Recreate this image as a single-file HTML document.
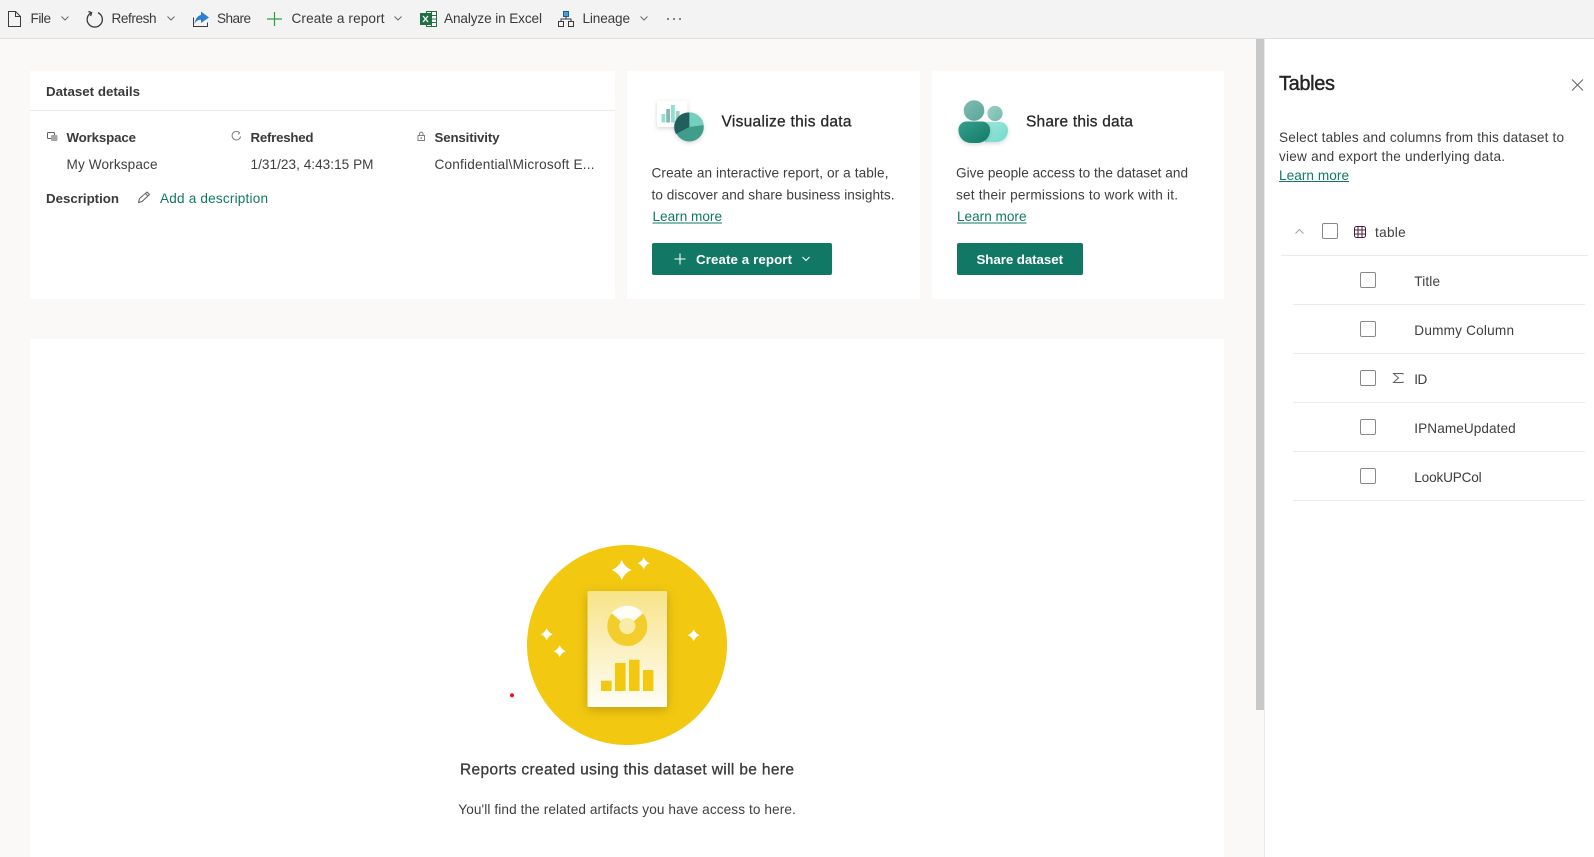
<!DOCTYPE html>
<html lang="en">
<head>
<meta charset="utf-8">
<title>Dataset details</title>
<style>
html,body{margin:0;padding:0;background:#faf9f8;width:1594px;height:857px;overflow:hidden}
svg{display:block;position:absolute;left:0;top:0;font-size:13.6px;font-family:"Liberation Sans",Arial,sans-serif}
text{fill:#323130;white-space:pre}
.tb{fill:#3b3a39}
.b{font-weight:bold;fill:#3b3a39}
.l{fill:#117865}
.v{fill:#3f3e3c}
.ic{fill:none;stroke:#3b3a39}
.ch{fill:none;stroke:#6b6a69}
.cb{fill:#fff;stroke:#8a8886}
.dv{stroke:#edebe9}
</style>
</head>
<body>
<svg width="1594" height="857" viewBox="0 0 1594 857" xmlns="http://www.w3.org/2000/svg">
<defs>
<filter id="s1" x="-30%" y="-30%" width="160%" height="160%"><feDropShadow dx="0" dy="1.5" stdDeviation="2" flood-color="#000" flood-opacity=".16"/></filter>
<filter id="s2" x="-30%" y="-30%" width="160%" height="160%"><feDropShadow dx="0" dy="3" stdDeviation="5" flood-color="#7a6000" flood-opacity=".4"/></filter>
<linearGradient id="pg" x1="0" y1="0" x2="0" y2="1"><stop offset="0" stop-color="#f8e388"/><stop offset="1" stop-color="#fefdf8"/></linearGradient>
<linearGradient id="h1" x1="0" y1="0" x2="1" y2="1"><stop offset="0" stop-color="#80bdb2"/><stop offset="1" stop-color="#58a598"/></linearGradient>
<linearGradient id="h2" x1="0" y1="0" x2="1" y2="1"><stop offset="0" stop-color="#98cfc5"/><stop offset="1" stop-color="#74baae"/></linearGradient>
<linearGradient id="b1" x1="0" y1="0" x2="1" y2="1"><stop offset="0" stop-color="#37a08c"/><stop offset="1" stop-color="#0f7a67"/></linearGradient>
<linearGradient id="b2" x1="0" y1="0" x2="1" y2="1"><stop offset="0" stop-color="#a0e4da"/><stop offset="1" stop-color="#6fdccb"/></linearGradient>
</defs>

<!-- page -->
<rect width="1594" height="857" fill="#faf9f8"/>

<!-- toolbar -->
<rect width="1594" height="38.5" fill="#f3f3f3"/>
<rect y="38" width="1594" height="1" fill="#e1dfdd"/>

<path class="ic" d="M8.5 11.5H15.5L20.5 16.5V26.5H8.5ZM15.5 11.5V16.5H20.5"/>
<text class="tb" x="30.5" y="23" textLength="20.5">File</text>
<path class="ch" d="M61.5 16.5l3.5 3.5l3.5-3.5"/>

<path class="ic" style="stroke-width:1.3" d="M98 12.6A7.6 7.6 0 1 1 91.5 12.6M88.4 11.5L91.6 12.7L90.6 16"/>
<text class="tb" x="111.5" y="23" textLength="45">Refresh</text>
<path class="ch" d="M167.5 16.5l3.5 3.5l3.5-3.5"/>

<path class="ic" d="M193.5 17.5V26.5H207.5V22.5"/>
<path fill="#2f7fd0" d="M201 11.5L209 17.5L201 23V19.8C198 19.8 196 21 194.5 24C195 19.5 197.5 15.6 201 15Z"/>
<text class="tb" x="217" y="23" textLength="34">Share</text>

<path fill="none" stroke="#2ea043" stroke-width="1.2" d="M274.5 12V26M267 19H282"/>
<text class="tb" x="291.5" y="23" textLength="93">Create a report</text>
<path class="ch" d="M394.5 16.5l3.5 3.5l3.5-3.5"/>

<path fill="#fff" stroke="#1e7145" d="M426.5 11.5H436.5V26.5H426.5Z"/>
<path stroke="#1e7145" d="M427 15.5H436M427 19H436M427 22.5H436M431.5 12V26"/>
<rect x="420" y="13" width="11" height="12" fill="#1e7145"/>
<path stroke="#fff" stroke-width="1.3" fill="none" d="M423 16l5 6M428 16l-5 6"/>
<text class="tb" x="444" y="23" textLength="98">Analyze in Excel</text>

<rect x="563.5" y="11.5" width="5" height="5" fill="#4a9ae0" stroke="#1b5e9e"/>
<path class="ic" d="M566 16.5V19M561 21.5V19H571V21.5"/>
<rect class="ic" x="558.5" y="21.5" width="5" height="5"/>
<rect class="ic" x="568.5" y="21.5" width="5" height="5"/>
<text class="tb" x="582.5" y="23" textLength="47.5">Lineage</text>
<path class="ch" d="M640.5 16.5l3.5 3.5l3.5-3.5"/>
<circle cx="668" cy="19" r=".9" fill="#323130"/><circle cx="674" cy="19" r=".9" fill="#323130"/><circle cx="680" cy="19" r=".9" fill="#323130"/>

<!-- Dataset details card -->
<rect x="30" y="71" width="585" height="228" fill="#fff"/>
<rect x="30" y="110" width="585" height="1" fill="#edebe9"/>
<text class="b" x="46" y="96" font-size="13.3" textLength="94">Dataset details</text>

<rect x="47.5" y="132.5" width="7" height="6" rx="1" fill="#fff" stroke="#605e5c"/>
<rect x="51" y="135" width="6.5" height="6" rx="1" fill="#a8a6a4"/>
<text class="b" x="66.5" y="142" font-size="13.3" textLength="69.5">Workspace</text>
<text class="v" x="66.5" y="169" textLength="91">My Workspace</text>

<path fill="none" stroke="#808080" d="M239.5 132.7A4.3 4.3 0 1 0 240.6 136.5M237.7 131.5l1.9 1.3l-1.4 1.6"/>
<text class="b" x="250.5" y="142" font-size="13.3" textLength="63">Refreshed</text>
<text class="v" x="250.5" y="169" textLength="123">1/31/23, 4:43:15 PM</text>

<path fill="none" stroke="#808080" d="M418 135.5H424.5V140.5H418ZM419.5 135.5V133.5A1.8 1.8 0 0 1 423 133.5V135.5"/>
<circle cx="421.2" cy="138" r=".8" fill="#605e5c"/>
<text class="b" x="434.5" y="142" font-size="13.3" textLength="65">Sensitivity</text>
<text class="v" x="434.5" y="169" textLength="160">Confidential\Microsoft E...</text>

<text class="b" x="46" y="203" font-size="13.3" textLength="73">Description</text>
<path fill="none" stroke="#605e5c" d="M138.5 202.5L139.5 198.5L147 192L149.5 194.5L142 201.5ZM145.5 193.5L148 196"/>
<text class="l" x="160" y="203" textLength="108">Add a description</text>

<!-- Visualize card -->
<rect x="627" y="71" width="293" height="228" fill="#fff"/>
<rect x="657" y="100.5" width="30.5" height="26.5" fill="#fff" filter="url(#s1)"/>
<rect x="661.5" y="114" width="3.8" height="8.5" fill="#8fe0d2"/>
<rect x="666.2" y="109" width="3.8" height="13.5" fill="#8bb5ae"/>
<rect x="671" y="105" width="3.8" height="17.5" fill="#8fe0d2"/>
<rect x="675.8" y="111" width="3.8" height="11.5" fill="#a9cfc8"/>
<g filter="url(#s1)">
<circle cx="689.3" cy="127" r="14.5" fill="#3f9c8b"/>
<path d="M689.3 127V112.5A14.5 14.5 0 0 1 703.8 125Z" fill="#73cfbe"/>
<path d="M689.3 127L676 134A14.5 14.5 0 0 1 689.3 112.5Z" fill="#205e5b"/>
</g>
<text class="b" x="721.5" y="126.5" font-size="15.5" style="font-weight:normal;stroke:#323130;stroke-width:.3;fill:#252423" textLength="130">Visualize this data</text>
<text class="v" x="651.5" y="177.5" textLength="237">Create an interactive report, or a table,</text>
<text class="v" x="651.5" y="199.5" textLength="243">to discover and share business insights.</text>
<text class="l" x="652.5" y="221" textLength="69.5">Learn more</text>
<rect x="652.5" y="222.5" width="69.5" height="1" fill="#117865"/>
<rect x="652" y="243" width="180" height="32" rx="2" fill="#117865"/>
<path fill="none" stroke="#fff" stroke-width="1.1" d="M680 253.5V264.5M674.5 259H685.5"/>
<text x="696" y="264" font-size="13.3" style="fill:#fff;font-weight:bold" textLength="96">Create a report</text>
<path fill="none" stroke="#fff" d="M802.5 257l3.5 3.5l3.5-3.5"/>

<!-- Share card -->
<rect x="932" y="71" width="292" height="228" fill="#fff"/>
<circle cx="974" cy="110.5" r="10.3" fill="url(#h1)"/>
<circle cx="995" cy="113.5" r="7.6" fill="url(#h2)"/>
<path d="M985 122H1000A8 8 0 0 1 1008 130V130.5A11.5 11.5 0 0 1 996.5 142H985Z" fill="url(#b2)" filter="url(#s1)"/>
<path d="M966.5 121.5H982A8 8 0 0 1 990 129.5V130.5A12.5 12.5 0 0 1 977.5 143H971A12.5 12.5 0 0 1 958.5 130.5V129.5A8 8 0 0 1 966.5 121.5Z" fill="url(#b1)" filter="url(#s1)"/>
<text class="b" x="1026" y="126.5" font-size="15.5" style="font-weight:normal;stroke:#323130;stroke-width:.3;fill:#252423" textLength="107">Share this data</text>
<text class="v" x="956" y="177.5" textLength="232">Give people access to the dataset and</text>
<text class="v" x="956" y="199.5" textLength="222">set their permissions to work with it.</text>
<text class="l" x="957" y="221" textLength="69.5">Learn more</text>
<rect x="957" y="222.5" width="69.5" height="1" fill="#117865"/>
<rect x="957" y="243" width="126" height="32" rx="2" fill="#117865"/>
<text x="976.5" y="264" font-size="13.3" style="fill:#fff;font-weight:bold" textLength="86.5">Share dataset</text>

<!-- Related card -->
<rect x="30" y="339" width="1194" height="518" fill="#fff"/>
<circle cx="627" cy="645" r="100" fill="#f2c811"/>
<rect x="587.5" y="591" width="79.5" height="116" rx="1" fill="url(#pg)" filter="url(#s2)"/>
<circle cx="627.3" cy="626" r="14" fill="none" stroke="#f3cd2c" stroke-width="12"/>
<path d="M611.6 613.2A20.3 20.3 0 0 1 643 613.2L633.8 621.3A8 8 0 0 0 620.8 621.3Z" fill="#fffdf5"/>
<circle cx="627.3" cy="626" r="8" fill="#f9eba8"/>
<rect x="601" y="680.7" width="10.6" height="10.3" fill="#f2c811"/>
<rect x="615" y="663" width="10.6" height="28" fill="#f2c811"/>
<rect x="629" y="659.7" width="10.6" height="31.3" fill="#f2c811"/>
<rect x="643" y="670" width="10.4" height="21" fill="#f2c811"/>
<g fill="#fff">
<path d="M621.7 560Q624.5 567.2 631.7 570Q624.5 572.8 621.7 580Q618.9 572.8 611.7 570Q618.9 567.2 621.7 560Z"/>
<path d="M643.7 557.3Q645.4 561.6 649.7 563.3Q645.4 565 643.7 569.3Q642 565 637.7 563.3Q642 561.6 643.7 557.3Z"/>
<path d="M546.7 628.3Q548.4 632.6 552.7 634.3Q548.4 636 546.7 640.3Q545 636 540.7 634.3Q545 632.6 546.7 628.3Z"/>
<path d="M559.7 645.3Q561.4 649.6 565.7 651.3Q561.4 653 559.7 657.3Q558 653 553.7 651.3Q558 649.6 559.7 645.3Z"/>
<path d="M693.7 629.3Q695.4 633.6 699.7 635.3Q695.4 637 693.7 641.3Q692 637 687.7 635.3Q692 633.6 693.7 629.3Z"/>
</g>
<circle cx="512" cy="695.3" r="2" fill="#e81123"/>
<text x="460" y="774.5" font-size="15.5" style="stroke:#3b3a39;stroke-width:.3;fill:#3b3a39" textLength="334">Reports created using this dataset will be here</text>
<text class="v" x="458.3" y="814" textLength="337.5">You'll find the related artifacts you have access to here.</text>

<!-- scrollbar -->
<rect x="1256" y="39" width="8" height="671" fill="#c8c8c8"/>

<!-- Tables panel -->
<rect x="1264" y="39" width="330" height="818" fill="#fff"/>
<rect x="1264" y="39" width="1" height="818" fill="#edebe9"/>
<text x="1279" y="90" font-size="20" style="stroke:#252423;stroke-width:.4;fill:#252423" textLength="56">Tables</text>
<path fill="none" stroke="#605e5c" stroke-width=".9" d="M1572 79.5L1583 90.5M1583 79.5L1572 90.5"/>
<text class="v" x="1279" y="142" textLength="285">Select tables and columns from this dataset to</text>
<text class="v" x="1279" y="161" textLength="226">view and export the underlying data.</text>
<text class="l" x="1279" y="180" textLength="70">Learn more</text>
<rect x="1279" y="181" width="70" height="1" fill="#117865"/>

<path fill="none" stroke="#a19f9d" d="M1295.5 233.5l4-4l4 4"/>
<rect class="cb" x="1322.5" y="223.5" width="15" height="15" rx="1.5"/>
<path fill="none" stroke="#4a2040" d="M1354.5 228.5A2 2 0 0 1 1356.5 226.5H1363.5A2 2 0 0 1 1365.5 228.5V235.5A2 2 0 0 1 1363.5 237.5H1356.5A2 2 0 0 1 1354.5 235.5ZM1358 226.5V237.5M1362 226.5V237.5M1354.5 230H1365.5M1354.5 234H1365.5"/>
<text class="v" x="1375" y="237" textLength="30.7">table</text>
<line class="dv" x1="1281" y1="255.5" x2="1588" y2="255.5"/>

<rect class="cb" x="1360.5" y="272.5" width="15" height="15" rx="1.5"/>
<text class="v" x="1414.3" y="286" textLength="25.7">Title</text>
<line class="dv" x1="1293" y1="304.5" x2="1585" y2="304.5"/>

<rect class="cb" x="1360.5" y="321.5" width="15" height="15" rx="1.5"/>
<text class="v" x="1414.3" y="335" textLength="99.7">Dummy Column</text>
<line class="dv" x1="1293" y1="353.5" x2="1585" y2="353.5"/>

<rect class="cb" x="1360.5" y="370.5" width="15" height="15" rx="1.5"/>
<path fill="none" stroke="#605e5c" d="M1403 374.5V373.5H1393.5L1398.5 378L1393.5 382.5H1403V381.5"/>
<text class="v" x="1414.3" y="384" textLength="13">ID</text>
<line class="dv" x1="1293" y1="402.5" x2="1585" y2="402.5"/>

<rect class="cb" x="1360.5" y="419.5" width="15" height="15" rx="1.5"/>
<text class="v" x="1414.3" y="433" textLength="101.4">IPNameUpdated</text>
<line class="dv" x1="1293" y1="451.5" x2="1585" y2="451.5"/>

<rect class="cb" x="1360.5" y="468.5" width="15" height="15" rx="1.5"/>
<text class="v" x="1414.3" y="482" textLength="67.4">LookUPCol</text>
<line class="dv" x1="1293" y1="500.5" x2="1585" y2="500.5"/>
</svg>
</body>
</html>
